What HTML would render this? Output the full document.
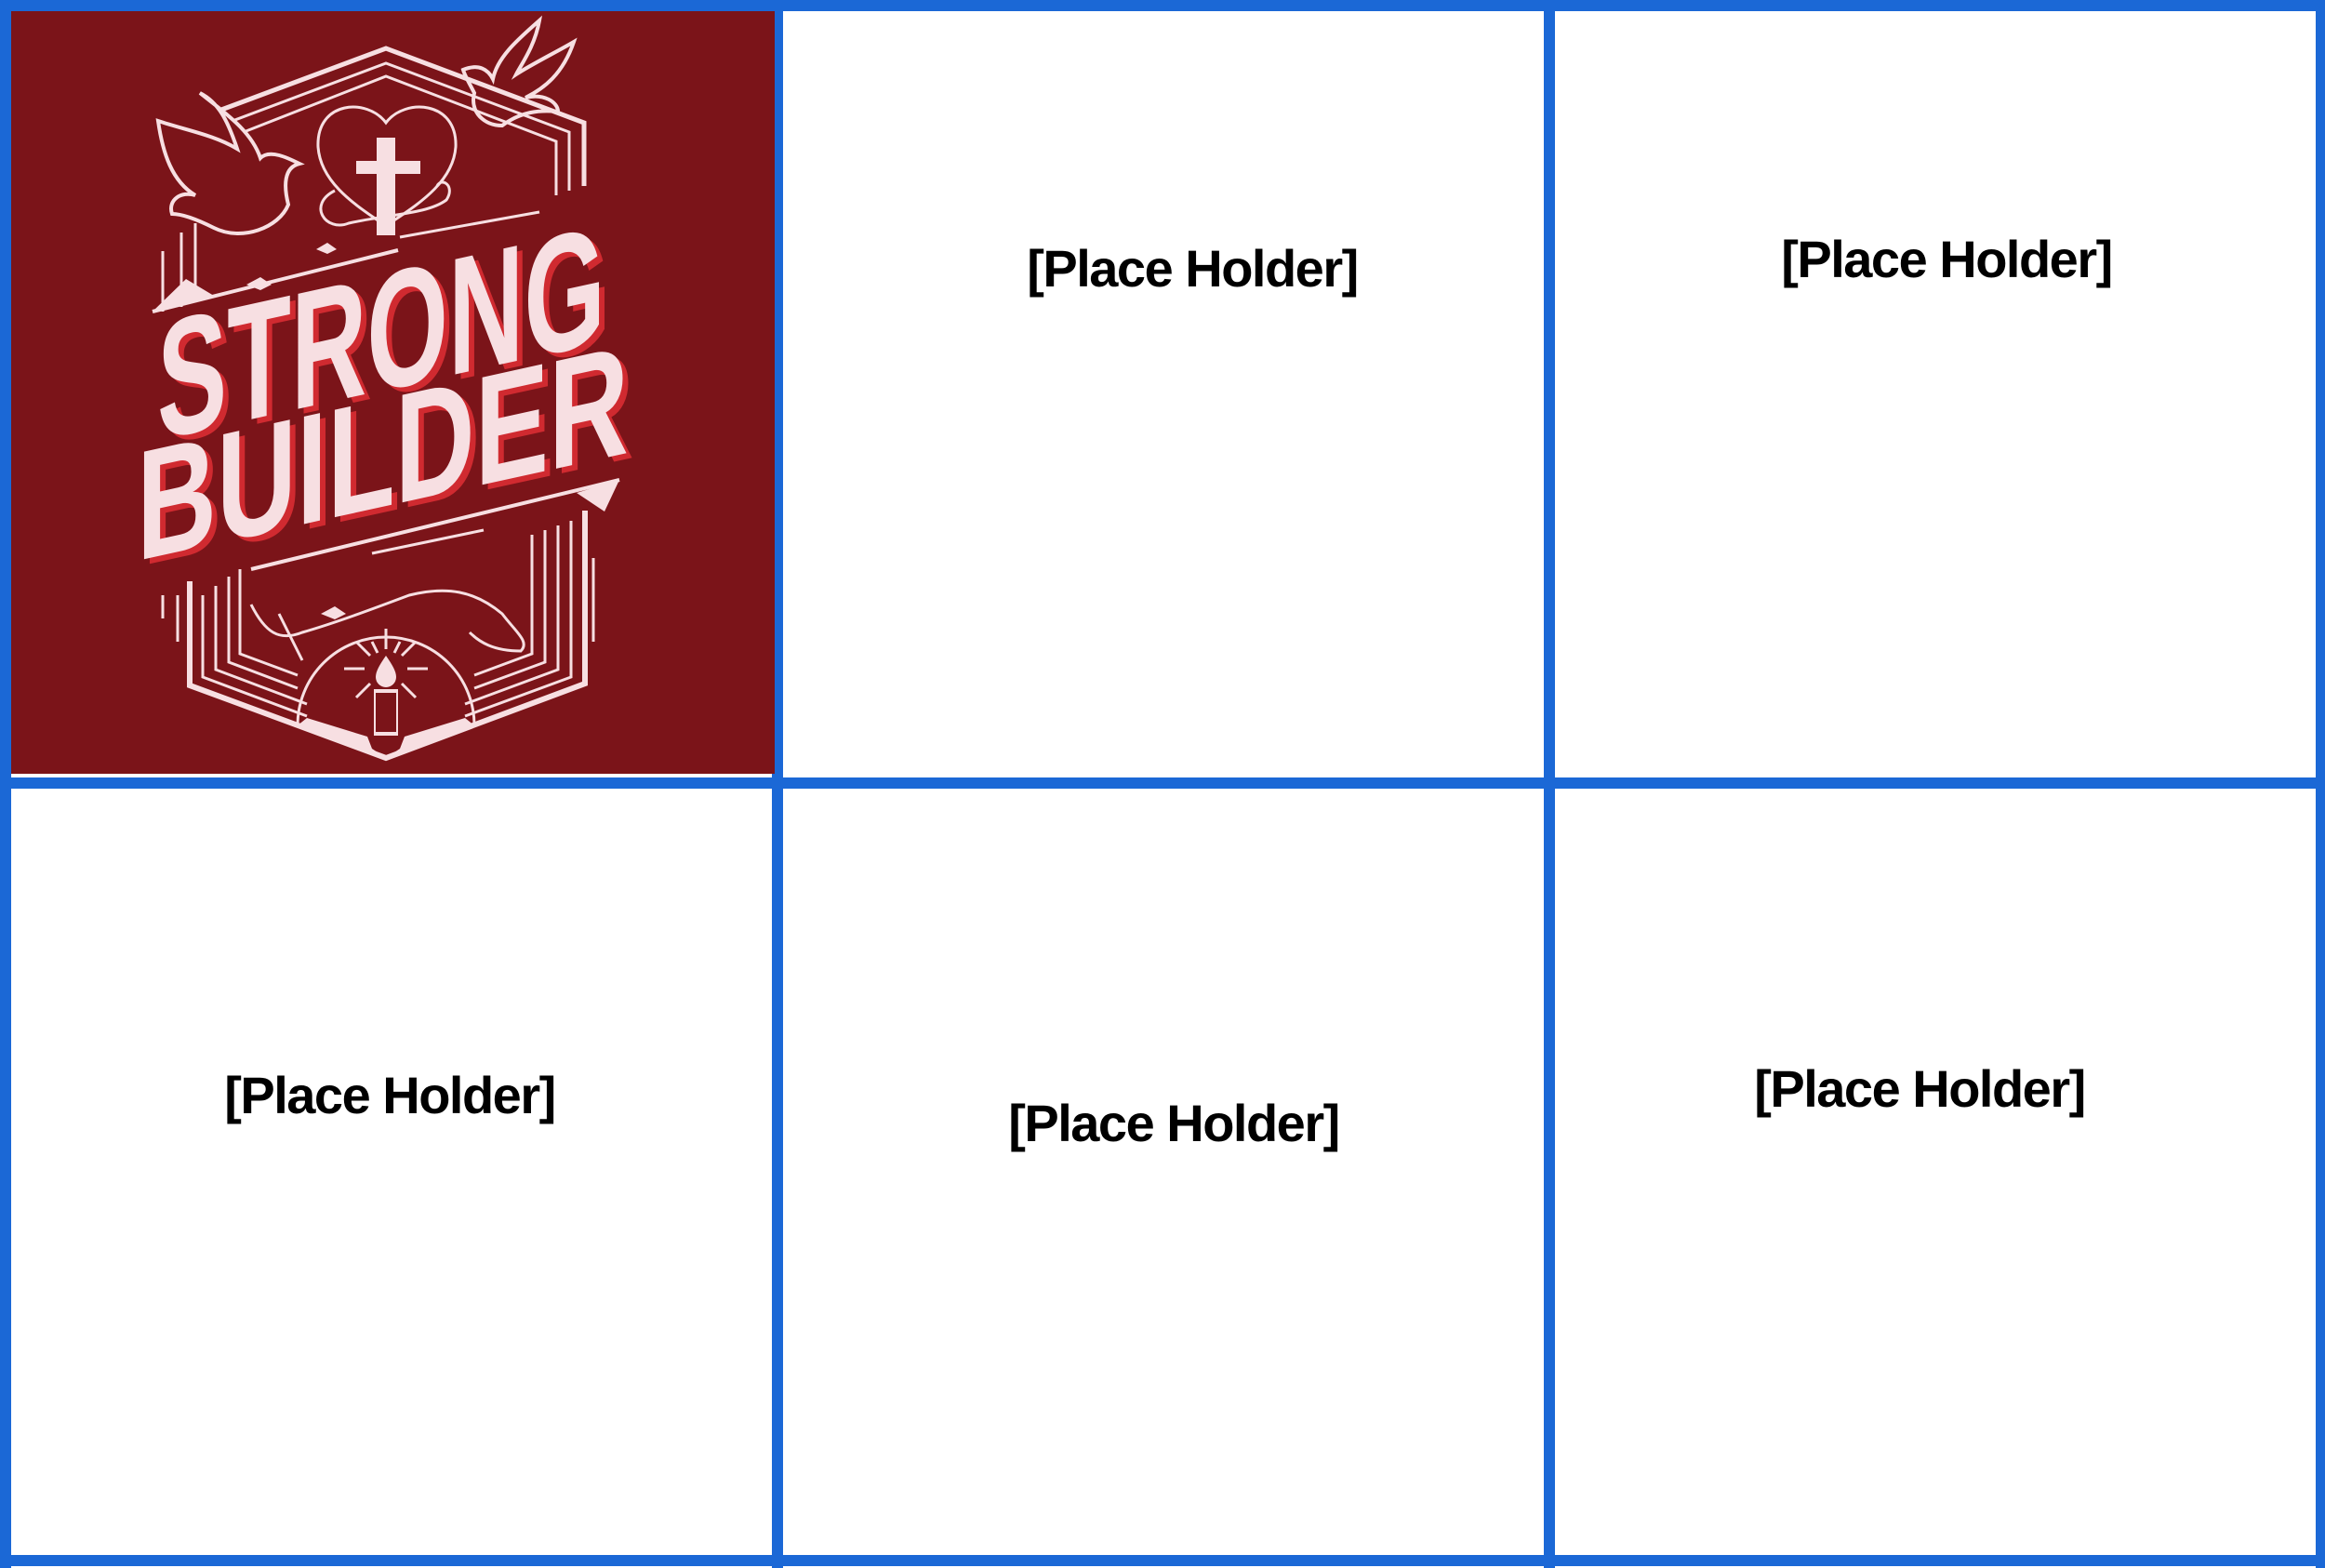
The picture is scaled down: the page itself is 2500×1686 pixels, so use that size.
<!DOCTYPE html>
<html><head><meta charset="utf-8">
<style>
html,body{margin:0;padding:0;}
body{width:2500px;height:1686px;position:relative;background:#fff;overflow:hidden;font-family:"Liberation Sans",sans-serif;}
.b{position:absolute;background:#1B68D6;}
.t{position:absolute;width:700px;text-align:center;font-weight:bold;font-size:56px;line-height:60px;letter-spacing:-1.5px;color:#000;white-space:nowrap;}
</style></head><body>
<div class="b" style="left:0;top:0;width:2500px;height:12px"></div>
<div class="b" style="left:0;top:1672px;width:2500px;height:12px"></div>
<div class="b" style="left:0;top:836px;width:2500px;height:12px"></div>
<div class="b" style="left:0;top:0;width:12px;height:1686px"></div>
<div class="b" style="left:830px;top:0;width:12px;height:1686px"></div>
<div class="b" style="left:1660px;top:0;width:12px;height:1686px"></div>
<div class="b" style="left:2490px;top:0;width:10px;height:1686px"></div>

<svg style="position:absolute;left:0;top:0" width="842" height="848" viewBox="0 0 842 848">
<rect x="12" y="12" width="821" height="820" fill="#7B1419"/>
<g fill="none" stroke="#F7DFE2" stroke-width="4">
 <polyline points="238,118 415,52 628,132 628,200" stroke-width="5"/>
 <polyline points="250,130 415,68 612,142 612,205" stroke-width="3"/>
 <polyline points="262,142 415,82 598,152 598,210" stroke-width="3"/>
 <line x1="175" y1="270" x2="175" y2="335" stroke-width="3"/>
 <line x1="195" y1="250" x2="195" y2="330" stroke-width="3"/>
 <line x1="210" y1="240" x2="210" y2="325" stroke-width="3"/>
 <path d="M415 132 C395 105 340 108 342 158 C345 200 390 225 415 243 C440 225 487 200 490 158 C492 108 435 105 415 132 Z" stroke-width="3"/>
 <path d="M360 205 C330 220 350 250 375 240 C420 230 460 230 480 215 C490 200 475 190 470 200" stroke-width="3"/>
 <path d="M170 130 C200 140 230 145 255 160 C245 130 235 110 215 100 C240 120 270 140 280 170 C290 160 310 170 322 176 C305 180 305 200 310 220 C300 245 260 260 230 245 C210 235 195 230 185 230 C180 215 195 205 210 210 C185 195 175 165 170 130 Z" stroke-width="4"/>
 <path d="M498 75 C515 68 525 75 530 85 C535 60 560 40 580 22 C575 50 560 70 555 80 C570 70 600 55 617 45 C605 80 585 95 565 105 C585 100 600 110 600 120 C580 118 560 120 540 135 C520 135 505 120 510 100 C505 90 500 82 498 75 Z" stroke-width="4"/>
 <line x1="164" y1="335" x2="428" y2="269" stroke-width="4"/>
 <line x1="430" y1="255" x2="580" y2="228" stroke-width="3"/>
 <line x1="666" y1="516" x2="270" y2="612" stroke-width="4"/>
 <line x1="400" y1="595" x2="520" y2="570" stroke-width="3"/>
 <polyline points="204,625 204,737 415,815 629,735 629,549" stroke-width="6"/>
 <polyline points="218,640 218,728 330,770" stroke-width="3"/>
 <polyline points="232,630 232,720 330,757" stroke-width="3"/>
 <polyline points="246,620 246,712 320,740" stroke-width="3"/>
 <polyline points="258,612 258,703 320,726" stroke-width="3"/>
 <polyline points="500,770 614,728 614,560" stroke-width="3"/>
 <polyline points="500,757 600,720 600,565" stroke-width="3"/>
 <polyline points="510,740 586,712 586,570" stroke-width="3"/>
 <polyline points="510,726 572,703 572,575" stroke-width="3"/>
 <line x1="175" y1="640" x2="175" y2="665" stroke-width="3"/>
 <line x1="191" y1="640" x2="191" y2="690" stroke-width="3"/>
 <line x1="638" y1="600" x2="638" y2="690" stroke-width="3"/>
 <path d="M320 780 A95 95 0 0 1 510 780" stroke-width="3"/>
 <path d="M270 650 C285 680 300 690 325 680 C360 670 400 655 440 640 C480 630 510 635 540 660 C555 680 570 690 560 700 C530 700 515 690 505 680 M300 660 C310 680 320 700 325 710" stroke-width="3"/>
 <g stroke-width="3">
 <line x1="415" y1="676" x2="415" y2="698"/><line x1="370" y1="719" x2="392" y2="719"/><line x1="438" y1="719" x2="460" y2="719"/>
 <line x1="383" y1="690" x2="398" y2="705"/><line x1="447" y1="690" x2="432" y2="705"/>
 <line x1="383" y1="750" x2="398" y2="735"/><line x1="447" y1="750" x2="432" y2="735"/>
 <line x1="400" y1="690" x2="406" y2="702"/><line x1="430" y1="690" x2="424" y2="702"/>
 </g>
</g>
<g fill="#F7DFE2">
 <rect x="405" y="148" width="20" height="105"/>
 <rect x="383" y="173" width="69" height="14"/>
 <path d="M415 705 C408 715 404 722 404 728 A11 11 0 0 0 426 728 C426 722 422 715 415 705 Z"/>
 <path d="M402 741 h26 v50 h-26 Z M404 745 v42 h22 v-42 Z" fill-rule="evenodd"/>
 <path d="M320 780 L330 772 L395 792 L400 805 L415 815 L430 805 L435 792 L500 772 L510 780 L415 818 Z"/>
 <path d="M164 335 L200 300 L230 318 Z M666 516 L620 530 L650 550 Z"/>
 <path d="M265 306 l15 -8 l12 8 l-12 6 Z M340 268 l12 -7 l10 7 l-10 5 Z M345 660 l15 -8 l12 8 l-12 6 Z"/>
</g>
<g font-family="Liberation Sans, sans-serif" font-weight="bold">
 <g transform="translate(175,478) skewY(-12.4)">
  <text x="0" y="0" font-size="180" textLength="482" lengthAdjust="spacingAndGlyphs" fill="#D02A30">STRONG</text>
 </g>
 <g transform="translate(169,473) skewY(-12.4)">
  <text x="0" y="0" font-size="180" textLength="482" lengthAdjust="spacingAndGlyphs" fill="#F7DFE2">STRONG</text>
 </g>
 <g transform="translate(153,608) skewY(-12.4)">
  <text x="0" y="0" font-size="168" textLength="529" lengthAdjust="spacingAndGlyphs" fill="#D02A30">BUILDER</text>
 </g>
 <g transform="translate(147,603) skewY(-12.4)">
  <text x="0" y="0" font-size="168" textLength="529" lengthAdjust="spacingAndGlyphs" fill="#F7DFE2">BUILDER</text>
 </g>
</g>
</svg>

<div class="t" style="left:932px;top:259px">[Place Holder]</div>
<div class="t" style="left:1743px;top:249px">[Place Holder]</div>
<div class="t" style="left:69px;top:1148px">[Place Holder]</div>
<div class="t" style="left:912px;top:1178px">[Place Holder]</div>
<div class="t" style="left:1714px;top:1141px">[Place Holder]</div>
</body></html>
